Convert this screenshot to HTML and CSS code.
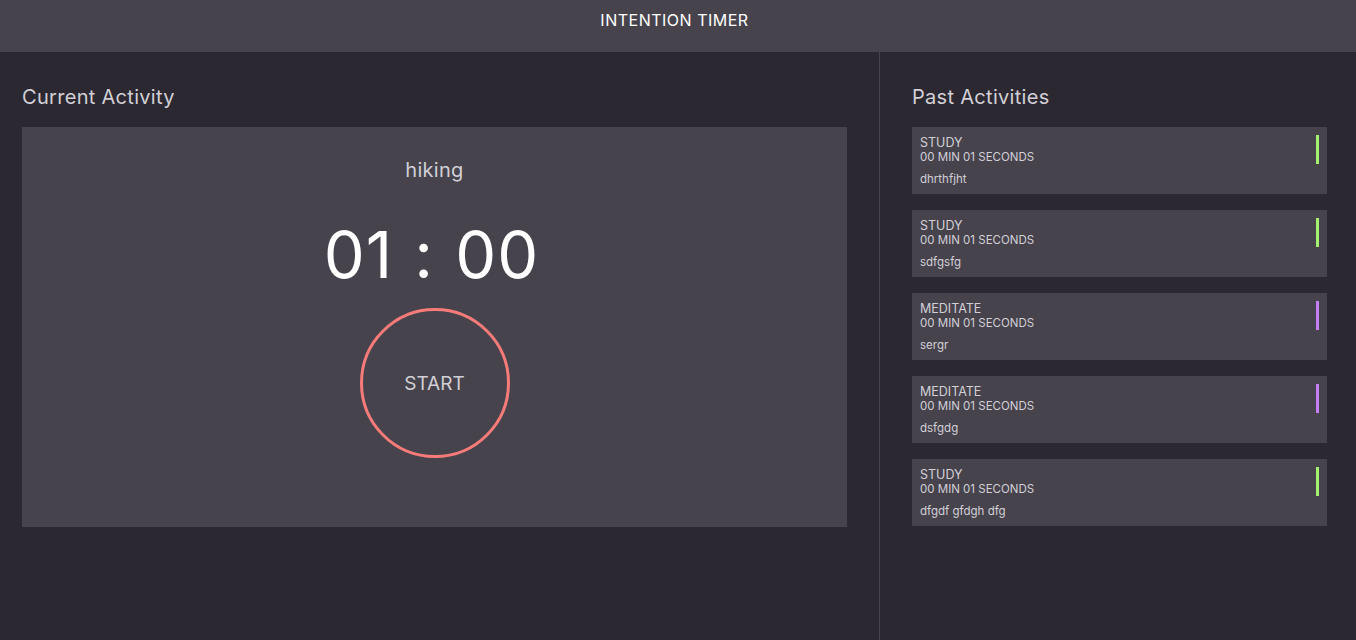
FILE: index.html
```html
<!DOCTYPE html>
<html>
<head>
<meta charset="utf-8">
<link rel="stylesheet" href="styles.css">
</head>
<body>
<header class="topbar">INTENTION TIMER</header>
<main class="layout">
  <section class="current">
    <h2 class="heading">Current Activity</h2>
    <div class="timer-card">
      <div class="activity-name">hiking</div>
      <div class="clock">01 : 00</div>
      <button class="start">START</button>
    </div>
  </section>
  <aside class="past">
    <h2 class="heading">Past Activities</h2>
    <ul class="past-list">
      <li class="past-card">
        <div class="past-info">
          <div class="past-cat">STUDY</div>
          <div class="past-time">00 MIN 01 SECONDS</div>
          <div class="past-desc">dhrthfjht</div>
        </div>
        <span class="bar study"></span>
      </li>
      <li class="past-card">
        <div class="past-info">
          <div class="past-cat">STUDY</div>
          <div class="past-time">00 MIN 01 SECONDS</div>
          <div class="past-desc">sdfgsfg</div>
        </div>
        <span class="bar study"></span>
      </li>
      <li class="past-card">
        <div class="past-info">
          <div class="past-cat">MEDITATE</div>
          <div class="past-time">00 MIN 01 SECONDS</div>
          <div class="past-desc">sergr</div>
        </div>
        <span class="bar meditate"></span>
      </li>
      <li class="past-card">
        <div class="past-info">
          <div class="past-cat">MEDITATE</div>
          <div class="past-time">00 MIN 01 SECONDS</div>
          <div class="past-desc">dsfgdg</div>
        </div>
        <span class="bar meditate"></span>
      </li>
      <li class="past-card">
        <div class="past-info">
          <div class="past-cat">STUDY</div>
          <div class="past-time">00 MIN 01 SECONDS</div>
          <div class="past-desc">dfgdf gfdgh dfg</div>
        </div>
        <span class="bar study"></span>
      </li>
    </ul>
  </aside>
</main>
</body>
</html>
```

FILE: styles.css
```css
* { box-sizing: border-box; }
html, body { margin: 0; padding: 0; height: 100%; }
body {
  background: #2b2832;
  font-family: Inter, "Noto Sans", sans-serif;
  color: #d2d0d6;
  display: flex;
  flex-direction: column;
}
.topbar {
  height: 52px;
  background: #46434d;
  color: #ffffff;
  font-size: 16px;
  letter-spacing: 0.5px;
  text-align: center;
  padding: 11px 7px 0 0;
  line-height: 18px;
  flex: none;
}
.layout {
  flex: 1;
  display: flex;
}
.current {
  width: 880px;
  padding: 32px 32px 0 22px;
  border-right: 1px solid #46434d;
}
.past {
  flex: 1;
  padding: 32px 29px 0 32px;
}
.heading {
  margin: 0;
  font-weight: 400;
  font-size: 20px;
  letter-spacing: 0.3px;
  line-height: 26px;
  height: 43px;
  color: #d2d0d6;
}
.timer-card {
  background: #46434d;
  height: 400px;
  display: flex;
  flex-direction: column;
  align-items: center;
  padding-top: 30px;
}
.activity-name {
  font-size: 20px;
  line-height: 26px;
  letter-spacing: 0.3px;
  color: #d2d0d6;
}
.clock {
  font-size: 65px;
  line-height: 70px;
  margin-top: 37px;
  margin-right: 6px;
  color: #ffffff;
  letter-spacing: 1px;
  word-spacing: 2px;
}
.start {
  margin-top: 18px;
  width: 150px;
  height: 150px;
  border-radius: 50%;
  border: 3px solid #f77b78;
  background: transparent;
  color: #d2d0d6;
  font-family: inherit;
  font-size: 19px;
  padding: 0;
}
.past-list {
  list-style: none;
  margin: 0;
  padding: 0;
  display: flex;
  flex-direction: column;
  gap: 16px;
}
.past-card {
  background: #46434d;
  height: 67px;
  display: flex;
  justify-content: space-between;
  align-items: flex-start;
  padding: 8px 8px 0 8px;
}
.past-cat {
  font-size: 12.5px;
  line-height: 15px;
  color: #d2d0d6;
}
.past-time {
  font-size: 11.5px;
  line-height: 14px;
  color: #d2d0d6;
}
.past-desc {
  font-size: 11.5px;
  line-height: 14px;
  margin-top: 8px;
  color: #d2d0d6;
}
.bar {
  width: 3px;
  height: 29px;
  display: block;
}
.bar.study { background: #a4f06f; }
.bar.meditate { background: #c67ff2; }
```
